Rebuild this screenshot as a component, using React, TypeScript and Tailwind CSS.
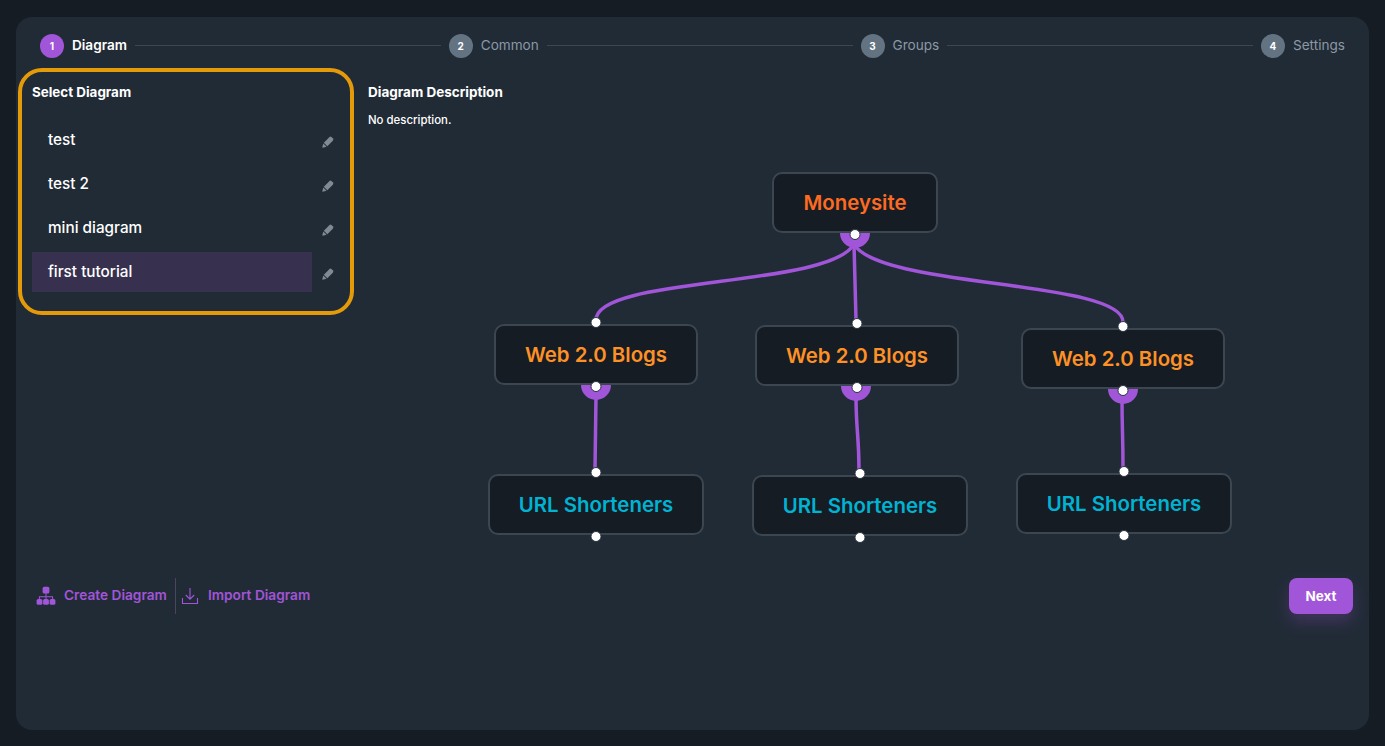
import { Fragment } from 'react';

const steps = ['Diagram', 'Common', 'Groups', 'Settings'];
const diagrams = ['test', 'test 2', 'mini diagram', 'first tutorial'];

const OX = 368;
const OY = 68;

type FlowNode = { label: string; x: number; y: number; w: number; color: string };

const nodes: FlowNode[] = [
  { label: 'Moneysite', x: 772, y: 172, w: 166, color: 'text-[#fd6b22]' },
  { label: 'Web 2.0 Blogs', x: 494, y: 324, w: 204, color: 'text-[#fd9126]' },
  { label: 'Web 2.0 Blogs', x: 755, y: 325, w: 204, color: 'text-[#fd9126]' },
  { label: 'Web 2.0 Blogs', x: 1021, y: 328, w: 204, color: 'text-[#fd9126]' },
  { label: 'URL Shorteners', x: 488, y: 474, w: 216, color: 'text-[#00b3d2]' },
  { label: 'URL Shorteners', x: 752, y: 475, w: 216, color: 'text-[#00b3d2]' },
  { label: 'URL Shorteners', x: 1016, y: 473, w: 216, color: 'text-[#00b3d2]' },
];

const edges = [
  'M854 244 C 830 288, 596 276, 596 320',
  'M854 244 L 856 320',
  'M854 244 C 878 288, 1123 280, 1123 322',
  'M596 396 L 595 470',
  'M856 396 C 856 430, 859 436, 859 470',
  'M1122 398 C 1122 430, 1123 436, 1123 468',
];

function PencilIcon() {
  return (
    <svg viewBox="0 0 12 12" className="h-3 w-3 fill-[#7f8a94]">
      <path d="M7.3 1.2a1.7 1.7 0 0 1 2.4 0l1.1 1.1a1.7 1.7 0 0 1 0 2.4L5.3 10.2 1.8 6.7z" />
      <path d="M1.3 7.4l3.3 3.3-3.9 1a.4.4 0 0 1-.4-.4z" />
    </svg>
  );
}

function CreateIcon() {
  return (
    <svg viewBox="0 0 20 20" className="h-5 w-5 fill-[#a155d8]">
      <rect x="6.6" y="0.8" width="6.8" height="6.8" rx="1.6" />
      <rect x="0.6" y="13" width="5.8" height="5.8" rx="1.6" />
      <rect x="7.1" y="13" width="5.8" height="5.8" rx="1.6" />
      <rect x="13.6" y="13" width="5.8" height="5.8" rx="1.6" />
      <path d="M9.5 7h1v3.2h6.6v3.3h-1v-2.3h-5.6v2.3h-1v-2.3H3.9v2.3h-1v-3.3h6.6z" />
    </svg>
  );
}

function ImportIcon() {
  return (
    <svg viewBox="0 0 18 18" fill="none" className="h-[18px] w-[18px] stroke-[#a155d8]" strokeWidth="1.1">
      <path d="M9 1v11M4.8 8 9 12.2 13.2 8" />
      <path d="M1.5 11v5.5h15V11" />
    </svg>
  );
}

function Handle({ top }: { top: boolean }) {
  return (
    <span
      className={`absolute left-1/2 z-20 h-[11px] w-[11px] -translate-x-1/2 rounded-full border-[1.5px] border-[#2b3640] bg-white ${
        top ? '-top-[9px]' : '-bottom-[9px]'
      }`}
    />
  );
}

export default function App() {
  return (
    <div className="h-[746px] bg-[#161c24] px-4 pt-[17px] font-['Inter','Liberation_Sans',sans-serif]">
      <div className="h-[713px] w-[1353px] rounded-2xl bg-[#212b36] pt-[17px] text-white">
        {/* Stepper */}
        <div className="flex h-6 items-center px-6">
          {steps.map((step, i) => (
            <Fragment key={step}>
              <span
                className={`flex h-6 w-6 shrink-0 items-center justify-center rounded-full text-[10px] font-bold text-white ${
                  i === 0 ? 'bg-[#a155d8]' : 'bg-[#637381]'
                }`}
              >
                {i + 1}
              </span>
              <span
                className={`mb-[2px] ml-2 text-[13.6px] ${i === 0 ? 'font-semibold text-white' : 'font-normal text-[#8b98a5]'}`}
              >
                {step}
              </span>
              {i < 3 && <span className="mx-2 mb-[2px] h-px flex-1 bg-[#3a4853]" />}
            </Fragment>
          ))}
        </div>

        <div className="mt-[10px] flex">
          {/* Diagram list */}
          <div className="ml-[2px] h-[247px] w-[336px] rounded-3xl border-4 border-[#e59a0a] pl-[10px] pr-4 pt-3">
            <h2 className="text-[13.4px] font-bold leading-[16px]">Select Diagram</h2>
            <ul className="mt-5 flex flex-col gap-1">
              {diagrams.map((name, i) => (
                <li key={name} className="flex h-10 items-center">
                  <div
                    className={`flex h-10 w-[280px] items-center pl-4 text-[15.3px] font-medium ${
                      i === 3 ? 'bg-[#38304f]' : ''
                    }`}
                  >
                    {name}
                  </div>
                  <span className="ml-[10px] mt-1">
                    <PencilIcon />
                  </span>
                </li>
              ))}
            </ul>
          </div>

          {/* Description and flow canvas */}
          <div className="relative ml-[14px] h-[500px] flex-1">
            <div className="pt-[16px]">
              <h2 className="text-[13.5px] font-bold leading-[16px]">Diagram Description</h2>
              <p className="mt-[13px] text-[11.4px] font-medium leading-[14px]">No description.</p>
            </div>
            <svg
              viewBox={`${OX} ${OY} 1000 500`}
              className="absolute left-0 top-0 h-[500px] w-[1000px]"
              fill="none"
            >
              {[
                [855, 233],
                [596, 385],
                [856, 386],
                [1123, 389],
              ].map(([cx, cy]) => (
                <path
                  key={cx}
                  d={`M${cx - 15} ${cy}a15 15 0 0 0 30 0z`}
                  className="fill-[#a155d8]"
                />
              ))}
              {edges.map((d) => (
                <path key={d} d={d} stroke="#a155d8" strokeWidth="3.5" />
              ))}
            </svg>
            {nodes.map((n, i) => (
              <div
                key={i}
                className="absolute flex h-[61px] items-center justify-center rounded-[10px] border-2 border-[#3c4650] bg-[#161c24] pt-[2px]"
                style={{ left: n.x - OX, top: n.y - OY, width: n.w }}
              >
                <span className={`text-[20.4px] font-semibold ${n.color}`}>{n.label}</span>
                {i > 0 && <Handle top />}
                <Handle top={false} />
              </div>
            ))}
          </div>
        </div>

        {/* Footer actions */}
        <div className="mt-[10px] flex h-9 items-center pl-[20px] pr-4">
          <button className="flex items-center gap-2 text-[13.7px] font-semibold text-[#a155d8]">
            <CreateIcon />
            <span className="mb-[2px]">Create Diagram</span>
          </button>
          <span className="ml-2 mr-[5px] h-9 w-px bg-[#4c4460]" />
          <button className="flex items-center gap-[9px] text-[13.7px] font-semibold text-[#a155d8]">
            <ImportIcon />
            <span className="mb-[2px]">Import Diagram</span>
          </button>
          <button className="ml-auto h-9 w-16 rounded-lg bg-[#a155d8] text-[13.5px] font-bold text-white shadow-[0_8px_16px_rgba(161,85,216,0.24)]">
            Next
          </button>
        </div>
      </div>
    </div>
  );
}
